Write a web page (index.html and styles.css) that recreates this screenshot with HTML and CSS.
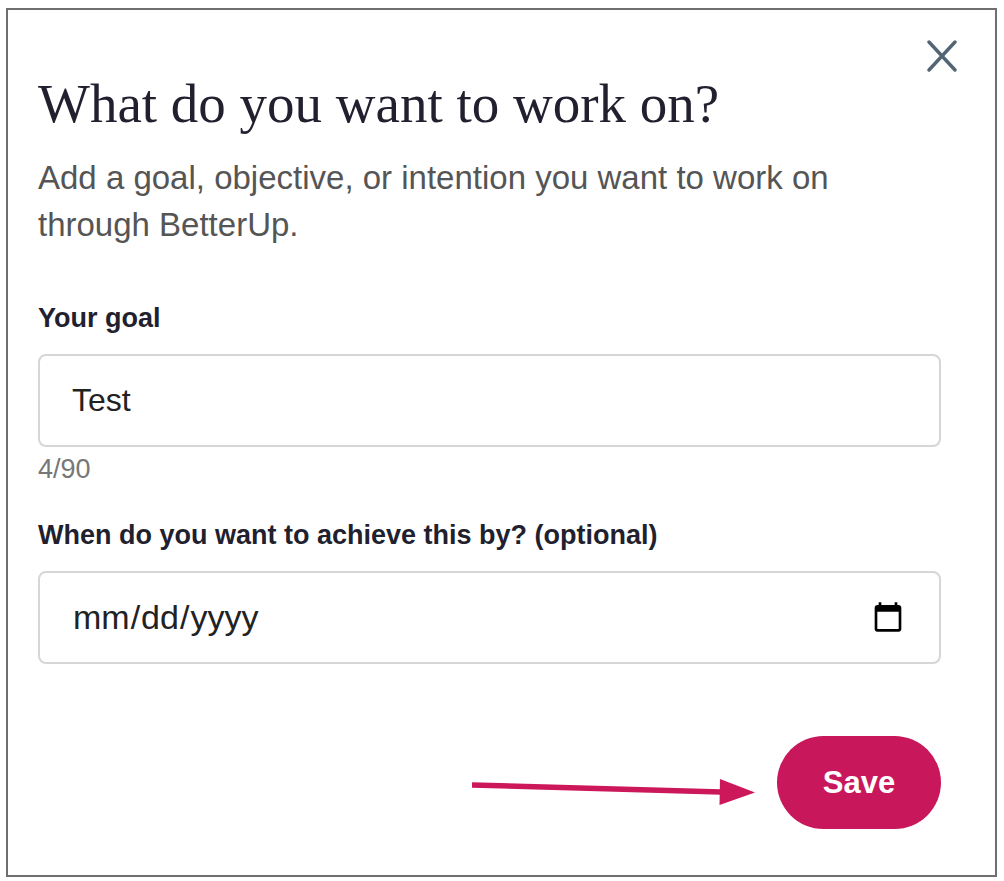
FILE: index.html
```
<!DOCTYPE html>
<html lang="en">
<head>
    <meta charset="UTF-8">
    <meta name="viewport" content="width=device-width, initial-scale=1.0">
    <title>What do you want to work on? | BetterUp</title>
    <link rel="stylesheet" href="styles.css">
</head>
<body>
    <main class="goal-dialog" role="dialog" aria-labelledby="goal-title">
        <button type="button" class="close" aria-label="Close">
            <svg width="32" height="32" viewBox="0 0 32 32" fill="none" stroke="currentColor" stroke-width="3.4" stroke-linecap="round">
                <path d="M3 2L29 30M29 2L3 30"/>
            </svg>
        </button>

        <h1 class="title" id="goal-title">What do you want to work on?</h1>
        <p class="intro">Add a goal, objective, or intention you want to work on through BetterUp.</p>

        <form class="goal-form">
            <div class="field">
                <label for="goal">Your goal</label>
                <input type="text" id="goal" value="Test" maxlength="90">
                <span class="counter">4/90</span>
            </div>

            <div class="field">
                <label for="date">When do you want to achieve this by? (optional)</label>
                <input type="date" id="date">
            </div>

            <div class="actions">
                <svg class="arrow" width="283" height="28" viewBox="0 0 283 28" aria-hidden="true">
                    <path d="M0 6L249 13" stroke="currentColor" stroke-width="5.4"/>
                    <path d="M248 0L283 13.500L247.500 26Z" fill="currentColor"/>
                </svg>
                <button type="submit" class="save">Save</button>
            </div>
        </form>
    </main>
</body>
</html>
```

FILE: styles.css
```
* {
    margin: 0;
    padding: 0;
    box-sizing: border-box;
}

body {
    background: #fff;
    font-family: "Liberation Sans", Arial, sans-serif;
    color: #221f2e;
    min-height: 100vh;
    display: flex;
    padding: 8px 7px 4px 6px;
}

.goal-dialog {
    position: relative;
    flex: 1;
    padding: 62px 54px 45px 30px;
    border: 2px solid #6e6f71;
}

.close {
    position: absolute;
    top: 30px;
    right: 37px;
    width: 32px;
    height: 32px;
    border: none;
    background: none;
    color: #536474;
    cursor: pointer;
}

.close svg {
    display: block;
}

.title {
    font-family: "Liberation Serif", "Times New Roman", serif;
    font-size: 55px;
    font-weight: normal;
    line-height: 64px;
    margin-bottom: 18px;
}

.intro {
    max-width: 840px;
    font-size: 33px;
    line-height: 47px;
    color: #555;
    margin-bottom: 52px;
}

.field {
    display: flex;
    flex-direction: column;
    margin-bottom: 32px;
}

label {
    font-size: 27px;
    font-weight: bold;
    line-height: 36px;
    margin-bottom: 18px;
}

input {
    width: 100%;
    height: 93px;
    padding: 0 32px;
    border: 2px solid #d6d6d6;
    border-radius: 8px;
    background: #fff;
    font-family: inherit;
    font-size: 32px;
    color: #222;
}

input[type="date"] {
    font-size: 34px;
}

.counter {
    font-size: 27px;
    line-height: 32px;
    margin-top: 6px;
    color: #777;
}

.actions {
    display: flex;
    justify-content: flex-end;
    align-items: center;
    gap: 22px;
    margin-top: 72px;
}

.arrow {
    color: #cc175b;
    margin-top: 20px;
}

.save {
    width: 164px;
    height: 93px;
    border: none;
    border-radius: 47px;
    background: #c9175b;
    color: #fff;
    font-family: inherit;
    font-size: 31px;
    font-weight: bold;
    cursor: pointer;
}
```
